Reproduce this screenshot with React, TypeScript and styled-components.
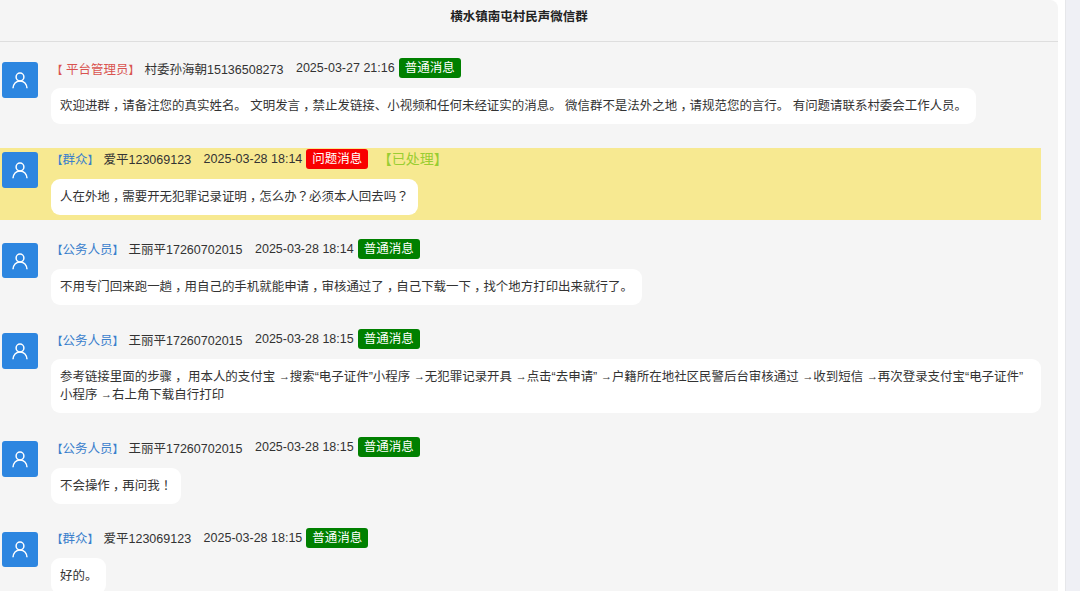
import { Fragment } from "react";
import styled, { createGlobalStyle } from "styled-components";

type Message = {
  role: string;
  admin?: boolean;
  name: string;
  time: string;
  problem?: boolean;
  text: string;
};

const messages: Message[] = [
  {
    role: " 平台管理员",
    admin: true,
    name: "村委孙海朝15136508273",
    time: "2025-03-27 21:16",
    text: "欢迎进群，请备注您的真实姓名。 文明发言，禁止发链接、小视频和任何未经证实的消息。 微信群不是法外之地，请规范您的言行。 有问题请联系村委会工作人员。",
  },
  {
    role: "群众",
    name: "爱平123069123",
    time: "2025-03-28 18:14",
    problem: true,
    text: "人在外地，需要开无犯罪记录证明，怎么办？必须本人回去吗？",
  },
  {
    role: "公务人员",
    name: "王丽平17260702015",
    time: "2025-03-28 18:14",
    text: "不用专门回来跑一趟，用自己的手机就能申请，审核通过了，自己下载一下，找个地方打印出来就行了。",
  },
  {
    role: "公务人员",
    name: "王丽平17260702015",
    time: "2025-03-28 18:15",
    text: "参考链接里面的步骤， 用本人的支付宝 →搜索“电子证件”小程序 →无犯罪记录开具 →点击“去申请” →户籍所在地社区民警后台审核通过 →收到短信 →再次登录支付宝“电子证件”\u200b小程序 →右上角下载自行打印",
  },
  {
    role: "公务人员",
    name: "王丽平17260702015",
    time: "2025-03-28 18:15",
    text: "不会操作，再问我！",
  },
  {
    role: "群众",
    name: "爱平123069123",
    time: "2025-03-28 18:15",
    text: "好的。",
  },
];

// centres full-width marks in their cell and narrows the arrows
function RichText({ text }: { text: string }) {
  return text.split(/([，！？→])/).map((part, i) => {
    if (part === "→") return <Arrow key={i}>{part}</Arrow>;
    if (part === "，") return <Comma key={i}>{part}</Comma>;
    if (/^[！？]$/.test(part)) return <Mark key={i}>{part}</Mark>;
    return <Fragment key={i}>{part}</Fragment>;
  });
}

function UserIcon() {
  return (
    <svg width="18" height="18" viewBox="0 0 18 18" fill="none" stroke="#fff" strokeWidth="1.5">
      <circle cx="9" cy="6" r="3.9" />
      <path d="M2 17.300c.3-4.300 3-7.400 7-7.400s6.700 3.100 7 7.400" />
    </svg>
  );
}

export default function App() {
  return (
    <Page>
      <GlobalStyle />
      <Panel>
        <Header>横水镇南屯村民声微信群</Header>
        <List>
          {messages.map((m, i) => (
            <Row key={i} $highlight={m.problem}>
              <Avatar>
                <UserIcon />
              </Avatar>
              <Body>
                <Meta>
                  <Role $admin={m.admin}>
                    <Bracket $open>【</Bracket>
                    {m.role}
                    <Bracket>】</Bracket>
                  </Role>
                  <Name>{m.name}</Name>
                  <Time>{m.time}</Time>
                  <Tag $problem={m.problem}>{m.problem ? "问题消息" : "普通消息"}</Tag>
                  {m.problem && <Status>【已处理】</Status>}
                </Meta>
                <Bubble>
                  <RichText text={m.text} />
                </Bubble>
              </Body>
            </Row>
          ))}
        </List>
      </Panel>
      <Side />
    </Page>
  );
}

const GlobalStyle = createGlobalStyle`
  body {
    margin: 0;
    overflow: hidden;
    background: #fff;
    color: #333;
    font-family: "Liberation Sans", "Noto Sans CJK SC", sans-serif;
    font-size: 12.5px;
  }
`;

const Page = styled.div`
  display: flex;
  justify-content: space-between;
  height: 591px;
  overflow: hidden;
`;

const Panel = styled.main`
  width: 1058px;
  background: #f5f5f5;
  border-top-right-radius: 8px;
`;

const Side = styled.aside`
  box-sizing: border-box;
  width: 15px;
  background: #eff0f5;
  border-left: 1px solid #e6e7ea;
`;

const Header = styled.header`
  box-sizing: border-box;
  height: 42px;
  padding: 0 20px 10px 0;
  border-bottom: 1px solid #dedede;
  display: flex;
  align-items: center;
  justify-content: center;
  font-weight: bold;
  color: #222;
`;

const List = styled.div`
  display: flex;
  flex-direction: column;
  gap: 18px;
  padding: 15.8px 17px 0 0;
`;

const Row = styled.section<{ $highlight?: boolean }>`
  display: flex;
  align-items: flex-start;
  padding: 0 0 5.700px 2px;
  background: ${(p) => (p.$highlight ? "#f7e991" : "transparent")};
`;

const Avatar = styled.div`
  flex: none;
  display: flex;
  align-items: center;
  justify-content: center;
  width: 35.5px;
  height: 35.5px;
  margin-top: 4.4px;
  border-radius: 3px;
  background: #2d86e0;
`;

const Body = styled.div`
  flex: 1;
  margin-left: 13.5px;
  min-width: 0;
`;

const Meta = styled.div`
  display: flex;
  align-items: center;
  height: 21px;
  white-space: nowrap;
`;

const Role = styled.span<{ $admin?: boolean }>`
  margin-right: 3.5px;
  margin-left: -1px;
  color: ${(p) => (p.$admin ? "#d9534f" : "#3a80cc")};
`;

const Bracket = styled.span<{ $open?: boolean }>`
  display: inline-block;
  width: 12.5px;
  font-size: 11px;
  text-align: ${(p) => (p.$open ? "right" : "left")};
`;

const Name = styled.span`
  margin-right: 12.5px;
`;

const Time = styled.span`
  margin-right: 4px;
`;

const Tag = styled.span<{ $problem?: boolean }>`
  padding: 0 6px;
  border-radius: 3px;
  line-height: 20px;
  color: #fff;
  background: ${(p) => (p.$problem ? "#f90000" : "#008000")};
`;

const Status = styled.span`
  margin-left: 9.5px;
  padding-bottom: 2px;
  font-size: 14px;
  color: #9acd32;
`;

const Bubble = styled.div`
  box-sizing: border-box;
  width: fit-content;
  max-width: 100%;
  margin-top: 9.6px;
  padding: 9px;
  border-radius: 9px;
  background: #fff;
  font-size: 12.46px;
  line-height: 18px;
`;

const Mark = styled.span`
  font-family: "Noto Sans CJK TC", sans-serif;
  line-height: 0;
`;

const Comma = styled(Mark)`
  vertical-align: -4px;
`;

const Arrow = styled.span`
  font-size: 11.2px;
  line-height: 0;
  vertical-align: 1px;
`;
